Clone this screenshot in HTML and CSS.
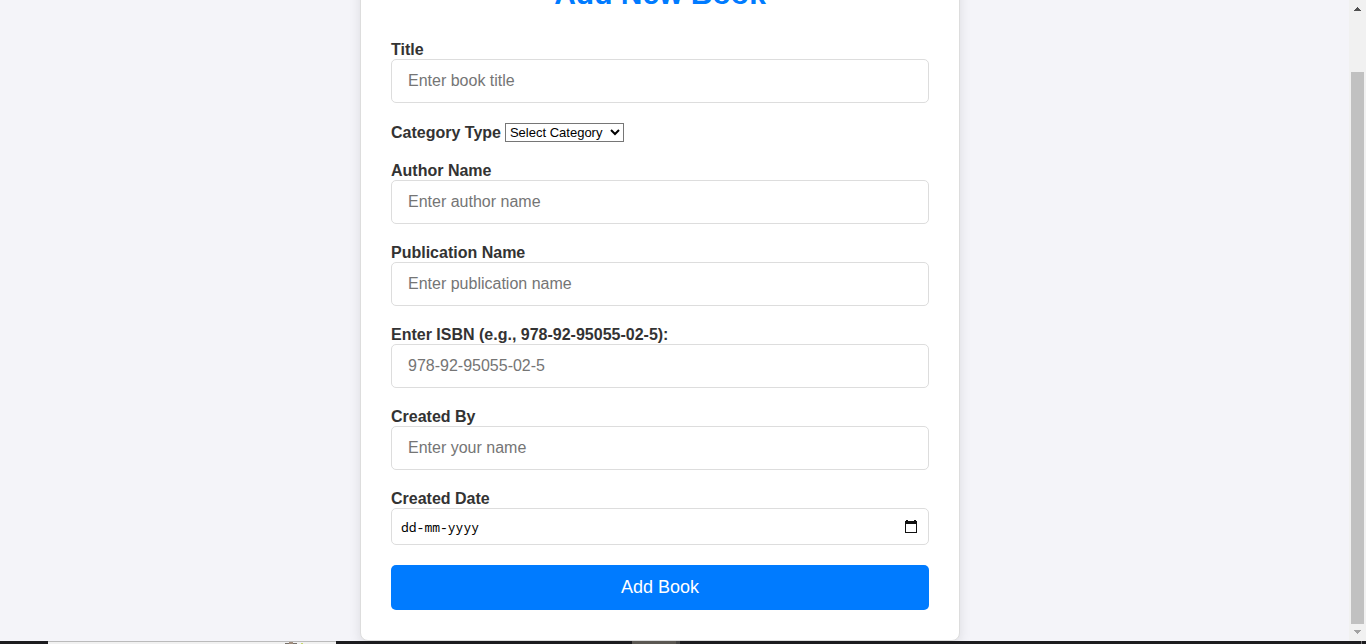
FILE: index.html
```html
<!DOCTYPE html>
<html lang="en">
<head>
<meta charset="utf-8">
<meta name="viewport" content="width=device-width, initial-scale=1">
<title>Add New Book</title>
<link rel="stylesheet" href="styles.css">
</head>
<body>
<div class="window">
  <main class="page">
    <form class="card">
      <h1 class="heading">Add New Book</h1>
      <div class="field">
        <label for="title">Title</label>
        <input class="text-input" id="title" type="text" placeholder="Enter book title">
      </div>
      <div class="field field-inline">
        <label for="category">Category Type</label>
        <select class="category" id="category"><option>Select Category</option></select>
      </div>
      <div class="field">
        <label for="author">Author Name</label>
        <input class="text-input" id="author" type="text" placeholder="Enter author name">
      </div>
      <div class="field">
        <label for="publication">Publication Name</label>
        <input class="text-input" id="publication" type="text" placeholder="Enter publication name">
      </div>
      <div class="field">
        <label for="isbn">Enter ISBN (e.g., 978-92-95055-02-5):</label>
        <input class="text-input" id="isbn" type="text" placeholder="978-92-95055-02-5">
      </div>
      <div class="field">
        <label for="creator">Created By</label>
        <input class="text-input" id="creator" type="text" placeholder="Enter your name">
      </div>
      <div class="field">
        <label for="date">Created Date</label>
        <div class="date-box">
          <input class="date-input" id="date" type="text" placeholder="dd-mm-yyyy">
          <button class="date-button" type="button" aria-label="Open calendar">
            <svg width="12" height="13" viewBox="0 0 12 13" shape-rendering="crispEdges" aria-hidden="true"><path fill="#111" d="M0 1h1V0h2v1h6V0h2v1h1v12H0zM1 4v8h10V4z"/></svg>
          </button>
        </div>
      </div>
      <button class="submit" type="submit">Add Book</button>
    </form>
  </main>
  <div class="scrollbar" aria-hidden="true">
    <svg class="arrow" width="17" height="17" viewBox="0 0 17 17" shape-rendering="crispEdges"><path fill="#505050" d="M8 7h1v1h1v1h1v1h1v1H5v-1h1V9h1V8h1z"/></svg>
    <div class="track"><div class="thumb"></div></div>
    <svg class="arrow" width="17" height="17" viewBox="0 0 17 17" shape-rendering="crispEdges"><path fill="#a3a3a3" d="M5 6h7v1h-1v1h-1v1H9v1H8V9H7V8H6V7H5z"/></svg>
  </div>
</div>
<div class="taskbar" aria-hidden="true">
  <div class="search"><svg width="20" height="2" viewBox="0 0 20 2"><path fill="#77716c" d="M1 1h12v1H1z"/><path fill="#a08c7c" d="M5 0h4v2H5z"/><path fill="#c5d86a" d="M17 1h2v1h-2z"/></svg></div>
  <div class="task"></div>
  <div class="desktop-edge"></div>
</div>
</body>
</html>
```
FILE: styles.css
```css
* {
  box-sizing: border-box;
}

body {
  display: flex;
  flex-direction: column;
  height: 100vh;
  margin: 0;
  overflow: hidden;
  background: #f4f4f9;
  color: #333;
  font-family: "Liberation Sans", Arial, sans-serif;
  font-size: 16px;
  line-height: 18px;
}

.window {
  display: flex;
  flex: 1;
  min-height: 0;
}

/* The form is scrolled to its end, so its top runs off the window. */
.page {
  display: flex;
  flex: 1;
  align-items: flex-end;
  justify-content: center;
  padding-right: 29px;
  overflow: hidden;
}

.card {
  width: 100%;
  max-width: 600px;
  padding: 30px;
  border: 1px solid #ddd;
  border-radius: 8px;
  background: #fff;
  box-shadow: 0 4px 12px rgba(0, 0, 0, 0.1);
}

.heading {
  margin: 0 0 30px;
  color: #007bff;
  font-size: 30px;
  line-height: 34px;
  text-align: center;
}

.field {
  display: flex;
  flex-direction: column;
  margin-bottom: 20px;
}

.field-inline {
  flex-direction: row;
  align-items: center;
  gap: 4px;
}

.field label {
  font-weight: bold;
}

.text-input {
  width: 100%;
  height: 44px;
  padding: 12px 16px;
  border: 1px solid #ddd;
  border-radius: 5px;
  font: inherit;
}

.text-input::placeholder {
  color: #757575;
}

.category {
  width: 119px;
  height: 19px;
  border: 1px solid #767676;
  border-radius: 0;
  background: #fff;
  color: #000;
  font-family: inherit;
  font-size: 13px;
}

.date-box {
  display: flex;
  align-items: center;
  height: 37px;
  padding: 0 11px 0 9px;
  border: 1px solid #ddd;
  border-radius: 5px;
}

.date-input {
  flex: 1;
  min-width: 0;
  padding: 0;
  border: 0;
  background: none;
  font-family: "Noto Sans Mono", "DejaVu Sans Mono", monospace;
  font-size: 13px;
}

.date-input::placeholder {
  color: #000;
}

.date-button {
  display: flex;
  padding: 0;
  border: 0;
  background: none;
}

.submit {
  display: block;
  width: 100%;
  height: 45px;
  border: 0;
  border-radius: 5px;
  background: #007bff;
  color: #fff;
  font-family: inherit;
  font-size: 18px;
}

.scrollbar {
  display: flex;
  flex-direction: column;
  width: 17px;
  background: #f1f1f1;
}

.arrow {
  display: block;
  flex: none;
}

.track {
  display: flex;
  flex: 1;
  flex-direction: column;
  justify-content: flex-end;
  padding: 0 2px;
}

.thumb {
  height: 91%;
  background: #c1c1c1;
}

.taskbar {
  display: flex;
  flex: none;
  height: 3px;
  background: #1c1c1f;
}

.search {
  display: flex;
  justify-content: flex-end;
  width: 288px;
  margin-left: 48px;
  padding-right: 32px;
  border-top: 1px solid #bbb;
  background: #f1f1f1;
}

.task {
  width: 48px;
  margin-left: 296px;
  border-right: 4px solid #444;
  background: #5a5752;
}

.desktop-edge {
  width: 1px;
  margin-right: 4px;
  margin-left: auto;
  background: #777;
}
```
